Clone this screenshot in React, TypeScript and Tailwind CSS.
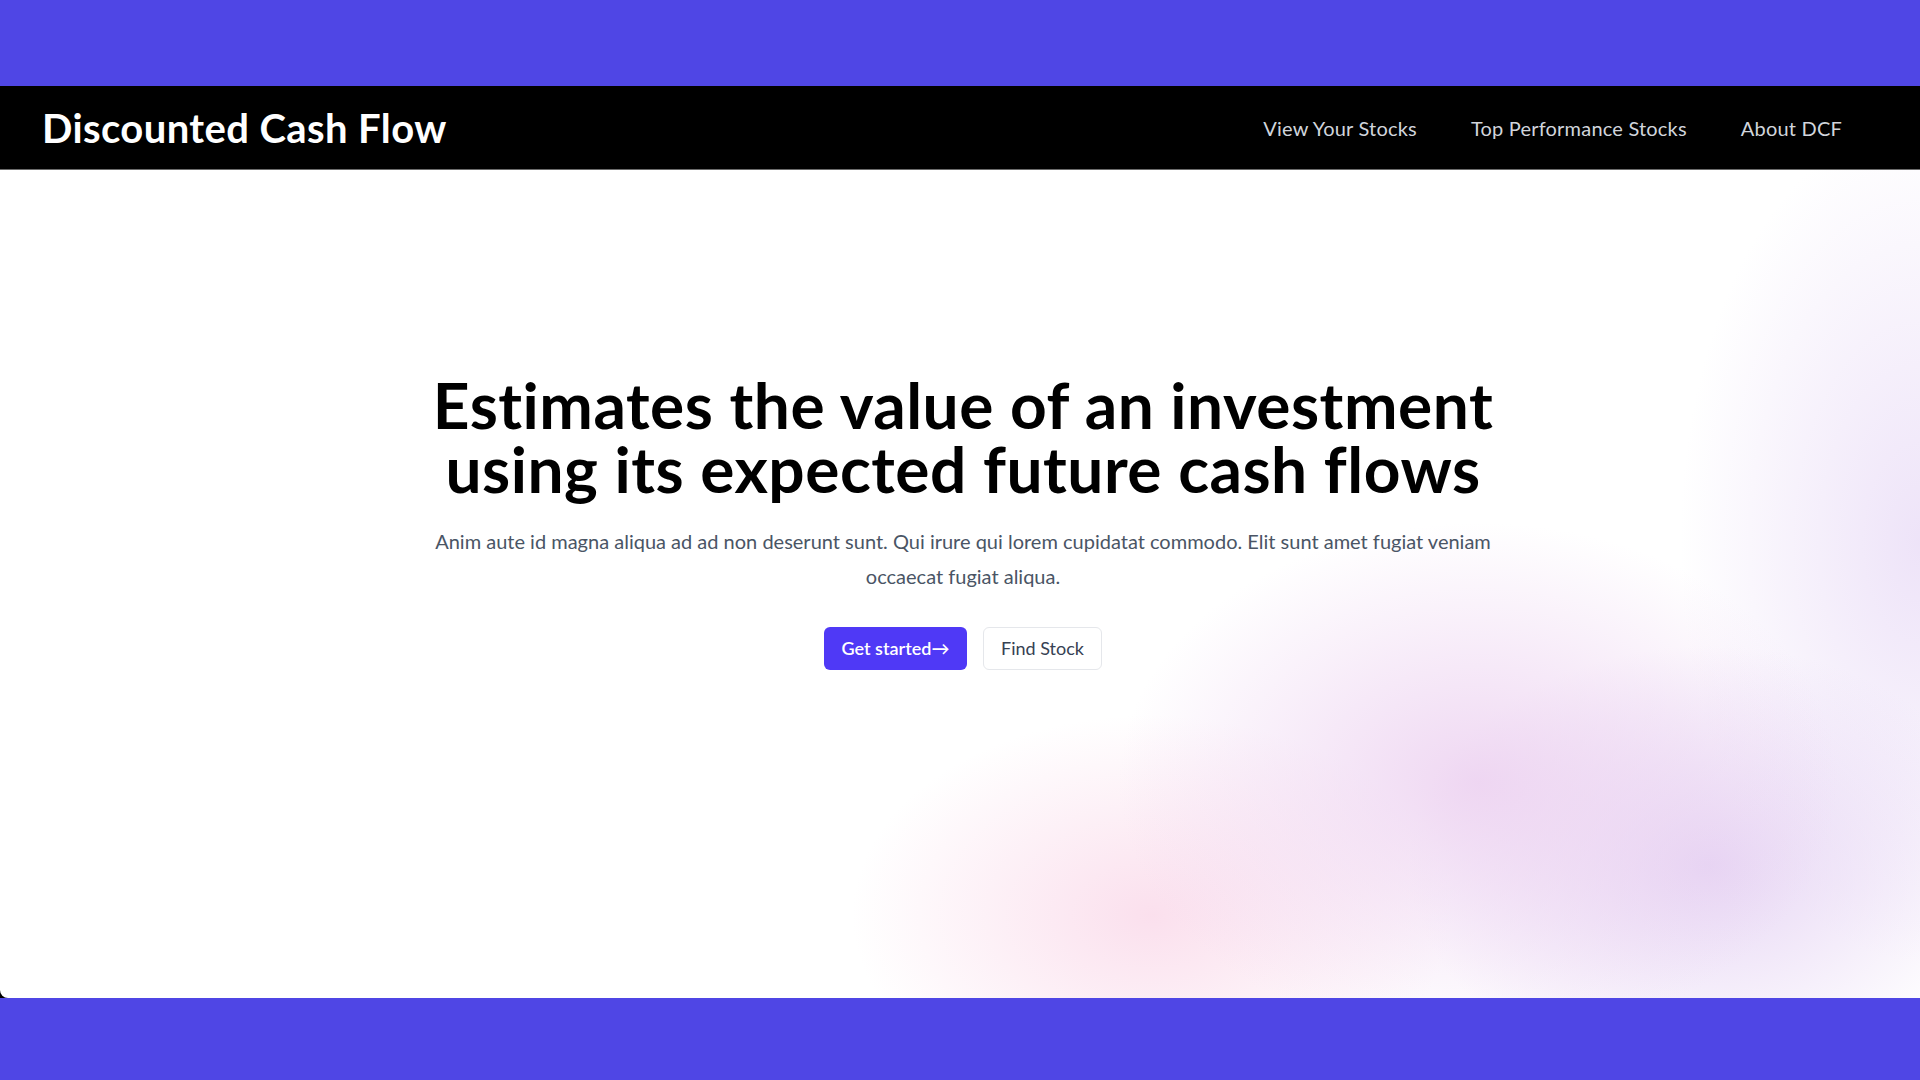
import * as React from "react";

const links = ["View Your Stocks", "Top Performance Stocks", "About DCF"];

const Navbar = () => {
  return (
    <nav className="flex h-[84px] items-center justify-between border-b border-[#6b6b6b] bg-black pl-[42px] pr-[78px]">
      <a href="#" className="text-[40px] font-bold leading-none tracking-[0.01em] text-white">
        Discounted Cash Flow
      </a>
      <div className="flex items-center gap-[54px]">
        {links.map((link) => {
          return (
            <a key={link} href="#" className="text-[20px] tracking-[0.01em] text-gray-300">
              {link}
            </a>
          );
        })}
      </div>
    </nav>
  );
};

const Hero = () => {
  return (
    <section className="flex h-[828px] flex-col items-center rounded-bl-[8px] bg-white bg-[radial-gradient(ellipse_360px_260px_at_77%_74%,rgba(236,208,240,0.85),transparent),radial-gradient(ellipse_300px_220px_at_89%_84%,rgba(226,206,242,0.85),transparent),radial-gradient(ellipse_300px_200px_at_60%_90%,rgba(250,218,234,0.85),transparent),radial-gradient(ellipse_240px_420px_at_100%_45%,rgba(232,218,246,0.75),transparent)] pl-[6px] pt-[203px]">
      <h1 className="max-w-[1120px] text-center text-[64px] font-bold leading-[64px] tracking-[0.008em] text-black">
        Estimates the value of an investment
        <br />
        using its expected future cash flows
      </h1>
      <p className="mt-[23px] max-w-[1080px] text-center text-[20px] leading-[35px] text-gray-600">
        Anim aute id magna aliqua ad ad non deserunt sunt. Qui irure qui lorem cupidatat commodo.
        Elit sunt amet fugiat veniam occaecat fugiat aliqua.
      </p>
      <div className="mt-[33px] flex items-center gap-4">
        <a
          href="#"
          className="flex h-[43px] w-[143px] items-center justify-center rounded-md bg-indigo-600 text-[18px] font-semibold text-white"
        >
          Get started→
        </a>
        <a
          href="#"
          className="flex h-[43px] w-[119px] items-center justify-center rounded-md border border-gray-200 bg-white text-[18px] text-gray-700"
        >
          Find Stock
        </a>
      </div>
    </section>
  );
};

const App = () => {
  return (
    <div className="min-h-screen bg-[#4f46e5] pt-[86px] pb-[82px] font-['Lato',sans-serif]">
      <div className="bg-black">
        <Navbar />
        <Hero />
      </div>
    </div>
  );
};

export default App;
